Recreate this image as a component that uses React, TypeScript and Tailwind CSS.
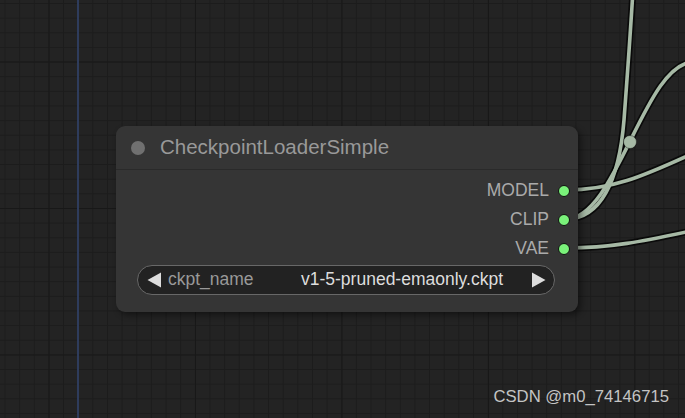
const LINK = "#a6b9a5";

const links = [
  // MODEL -> right
  "M566 190 C 610 190 640 178 700 150",
  // CLIP -> far up
  "M566 219 C 600 219 619 182 624 120 C 627 80 630 40 633 -10",
  // CLIP -> right (midpoint dot at 630,142)
  "M566 219 C 617 219 644 62 694 62",
  // VAE -> right
  "M566 248 C 610 248 640 242 700 229",
];

function Arrow({ dir }: { dir: "left" | "right" }) {
  return (
    <svg width="15" height="16" viewBox="0 0 15 16" className="shrink-0">
      {dir === "left" ? (
        <polygon points="14,0.5 14,15.5 0.5,8" fill="#dddddd" />
      ) : (
        <polygon points="1,0.5 1,15.5 14.5,8" fill="#dddddd" />
      )}
    </svg>
  );
}

function OutputSlot({ label }: { label: string }) {
  return (
    <div className="h-[29px] flex items-center justify-end gap-[9px] pr-[8px]">
      <span className="text-[17.5px] text-[#aaaaaa] leading-none">{label}</span>
      <span className="w-[12px] h-[12px] rounded-full bg-[#7af27a] border border-[#111111]" />
    </div>
  );
}

export default function App() {
  return (
    <div
      className="
        relative w-[685px] h-[418px] overflow-hidden bg-[#232323]
        font-['Liberation_Sans',Arial,sans-serif]
        [background-image:linear-gradient(to_right,#181818_1px,transparent_1px),linear-gradient(to_bottom,#181818_1px,transparent_1px),linear-gradient(to_right,#1c1c1c_1px,transparent_1px),linear-gradient(to_bottom,#1c1c1c_1px,transparent_1px)]
        [background-size:146.5px_100%,100%_146.5px,14.65px_100%,100%_14.65px]
        [background-position:48.5px_0,0_61.5px,4.5px_0,0_3px]
      "
    >
      <div className="absolute left-[77px] top-0 w-[2px] h-full bg-[#2e3c5c]" />

      <svg className="absolute inset-0 pointer-events-none" width="685" height="418">
        {links.map((d, i) => (
          <path key={"s" + i} d={d} fill="none" stroke="rgba(0,0,0,0.7)" strokeWidth="7" />
        ))}
        {links.map((d, i) => (
          <path key={"l" + i} d={d} fill="none" stroke={LINK} strokeWidth="3.6" />
        ))}
        <circle cx="630" cy="142" r="6.5" fill={LINK} stroke="rgba(0,0,0,0.4)" strokeWidth="1" />
      </svg>

      <div
        className="
          absolute left-[116px] top-[126px] w-[462px] flex flex-col
          bg-[#353535] rounded-[9px] shadow-[3px_3px_6px_rgba(0,0,0,0.45)]
        "
      >
        <div className="h-[44px] flex items-center pl-[15px] border-b border-[#2a2a2a]">
          <span className="w-[14px] h-[14px] rounded-full bg-[#707070]" />
          <span className="ml-[15px] text-[20.5px] text-[#999999] leading-none">
            CheckpointLoaderSimple
          </span>
        </div>

        <div className="pt-[6px] flex flex-col">
          <OutputSlot label="MODEL" />
          <OutputSlot label="CLIP" />
          <OutputSlot label="VAE" />
        </div>

        <div className="mt-[2px] mb-[17px] ml-[21px] w-[418px] h-[30px] flex items-center pl-[9px] pr-[8px] rounded-full bg-[#222222] border border-[#686868]">
          <Arrow dir="left" />
          <span className="ml-[6px] text-[17.5px] text-[#999999] leading-none">ckpt_name</span>
          <span className="flex-1" />
          <span className="mr-[28px] text-[17.5px] text-[#dddddd] leading-none">
            v1-5-pruned-emaonly.ckpt
          </span>
          <Arrow dir="right" />
        </div>
      </div>

      <div className="absolute right-[16px] top-[388px] text-[16.7px] leading-[18px] text-[#c4c4c4]">
        CSDN @m0_74146715
      </div>
    </div>
  );
}
